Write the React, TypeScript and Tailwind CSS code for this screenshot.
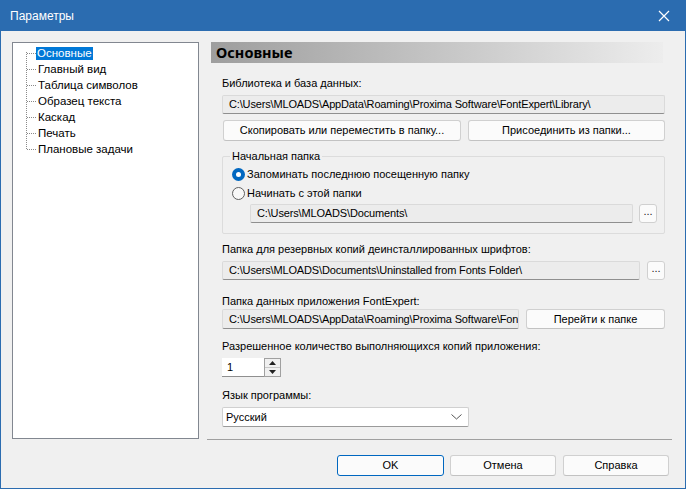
import React from "react";

const font = { fontFamily: '"Liberation Sans", Arial, sans-serif' };

const treeItems = ["Основные", "Главный вид", "Таблица символов", "Образец текста", "Каскад", "Печать", "Плановые задачи"];

const ReadOnlyField: React.FC<{ value: string; className?: string }> = ({ value, className }) => (
    <div className={`h-[19px] bg-[#ececec] border border-[#dadada] border-b-[#8f8f8f] rounded-[2px] pl-[6px] text-[11px] tracking-[-0.15px] leading-[17px] text-black overflow-hidden whitespace-nowrap ${className || ""}`}>
        {value}
    </div>
);

const Button: React.FC<{ label: string; className?: string }> = ({ label, className }) => (
    <div className={`flex items-center justify-center bg-[#fbfbfb] border border-[#d0d0d0] border-b-[#c2c2c2] rounded-[3px] text-[11px] text-black ${className || ""}`}>
        {label}
    </div>
);

const DotsButton: React.FC = () => (
    <div className="w-[18px] h-[19px] flex items-end justify-center bg-[#fbfbfb] border border-[#d0d0d0] rounded-[3px] text-[11px] leading-none text-[#222] pb-[5px]">
        ...
    </div>
);

export default function App() {
    return (
        <div style={font} className="w-[686px] h-[489px] flex flex-col bg-[#2b6cb0] select-none">
            {/* title bar */}
            <div className="h-[31px] flex items-center justify-between pl-[10px] pr-[16px] text-white text-[12px]">
                <span>Параметры</span>
                <svg width="12" height="12" viewBox="0 0 12 12">
                    <path d="M1 1 L11 11 M11 1 L1 11" stroke="white" strokeWidth="1.2" />
                </svg>
            </div>

            <div className="flex-1 mx-[1px] mb-[1px] bg-[#f0f0f0] flex flex-col">
                <div className="flex pt-[11px] pl-[11px]">
                    {/* tree */}
                    <div className="w-[187px] h-[397px] bg-white border border-[#828790] relative">
                        <div className="absolute left-[13px] top-[9px] h-[97px] border-l border-dotted border-[#8a8a8a]" />
                        <div className="pt-[2px] flex flex-col">
                            {treeItems.map((item, i) => (
                                <div key={item} className="h-[16px] flex items-center">
                                    <div className="ml-[14px] w-[9px] border-t border-dotted border-[#8a8a8a]" />
                                    <span className={`text-[11.5px] leading-[13px] px-[1px] ${i === 0 ? "bg-[#0078d7] text-white" : "text-black ml-[1px]"}`}>
                                        {item}
                                    </span>
                                </div>
                            ))}
                        </div>
                    </div>

                    {/* right panel */}
                    <div className="ml-[8px] w-[465px] h-[398px] border-b border-[#a0a0a0] flex flex-col">
                        <div className="ml-[4px] w-[452px] h-[21px] bg-gradient-to-r from-[#9e9e9e] to-[#ededed] flex items-center pl-[5px] text-[14.5px] font-bold text-black" style={{ fontFamily: '"Noto Sans", sans-serif' }}>
                            Основные
                        </div>

                        <div className="pl-[15px] w-[458px] flex flex-col text-[11px] text-black">
                            <div className="mt-[12px] leading-[16px]">Библиотека и база данных:</div>
                            <ReadOnlyField className="mt-[4px]" value="C:\Users\MLOADS\AppData\Roaming\Proxima Software\FontExpert\Library\" />
                            <div className="mt-[6px] flex gap-[7px] pl-[1px]">
                                <Button className="w-[238px] h-[21px]" label="Скопировать или переместить в папку..." />
                                <Button className="w-[197px] h-[21px]" label="Присоединить из папки..." />
                            </div>

                            {/* group */}
                            <div className="mt-[15px] h-[78px] border border-[#dcdcdc] rounded-[2px] relative">
                                <span className="absolute -top-[9px] left-[7px] px-[2px] bg-[#f0f0f0] leading-[16px]">Начальная папка</span>
                                <div className="pl-[9px] pt-[8px] flex flex-col">
                                    <div className="flex items-center h-[19px]">
                                        <div className="w-[13px] h-[13px] rounded-full bg-[#0067c0] flex items-center justify-center">
                                            <div className="w-[5px] h-[5px] rounded-full bg-white" />
                                        </div>
                                        <span className="ml-[2px]">Запоминать последнюю посещенную папку</span>
                                    </div>
                                    <div className="flex items-center h-[19px]">
                                        <div className="w-[13px] h-[13px] rounded-full border border-[#5f5f5f] bg-[#f8f8f8]" />
                                        <span className="ml-[2px]">Начинать с этой папки</span>
                                    </div>
                                    <div className="pl-[18px] mt-[1px] flex gap-[6px]">
                                        <ReadOnlyField className="w-[383px]" value="C:\Users\MLOADS\Documents\" />
                                        <DotsButton />
                                    </div>
                                </div>
                            </div>

                            <div className="mt-[7px] leading-[16px]">Папка для резервных копий деинсталлированных шрифтов:</div>
                            <div className="mt-[4px] flex gap-[7px]">
                                <ReadOnlyField className="w-[418px]" value="C:\Users\MLOADS\Documents\Uninstalled from Fonts Folder\" />
                                <DotsButton />
                            </div>

                            <div className="mt-[13px] leading-[16px]">Папка данных приложения FontExpert:</div>
                            <div className="mt-[0px] flex gap-[7px]">
                                <ReadOnlyField className="w-[297px] h-[20px] leading-[18px]" value="C:\Users\MLOADS\AppData\Roaming\Proxima Software\FontExpert\" />
                                <Button className="w-[139px] h-[20px]" label="Перейти к папке" />
                            </div>

                            <div className="mt-[9px] leading-[16px]">Разрешенное количество выполняющихся копий приложения:</div>
                            <div className="mt-[4px] flex">
                                <div className="w-[42px] h-[19px] bg-white border-b border-[#8f8f8f] pl-[5px] leading-[18px]">1</div>
                                <div className="w-[17px] h-[19px] border border-[#a0a0a0] flex flex-col">
                                    <div className="flex-1 flex items-center justify-center border-b border-[#c8c8c8]">
                                        <svg width="7" height="4" viewBox="0 0 7 4"><path d="M3.5 0 L7 4 L0 4 Z" fill="#202020" /></svg>
                                    </div>
                                    <div className="flex-1 flex items-center justify-center">
                                        <svg width="7" height="4" viewBox="0 0 7 4"><path d="M0 0 L7 0 L3.5 4 Z" fill="#202020" /></svg>
                                    </div>
                                </div>
                            </div>

                            <div className="mt-[10px] leading-[16px]">Язык программы:</div>
                            <div className="mt-[4px] w-[247px] h-[20px] bg-white border border-[#d0d0d0] border-b-[#9a9a9a] rounded-[2px] flex items-center justify-between pl-[3px] pr-[6px]">
                                <span>Русский</span>
                                <svg width="11" height="6" viewBox="0 0 11 6"><path d="M0.5 0.5 L5.5 5 L10.5 0.5" stroke="#555" fill="none" strokeWidth="1" /></svg>
                            </div>
                        </div>
                    </div>
                </div>

                {/* bottom buttons */}
                <div className="mt-[15px] flex pl-[336px] gap-[6px]">
                    <Button className="w-[107px] h-[21px] !border-[#0067c0]" label="OK" />
                    <Button className="w-[106px] h-[21px]" label="Отмена" />
                    <Button className="w-[106px] h-[21px] ml-[1px]" label="Справка" />
                </div>
            </div>
        </div>
    );
}
